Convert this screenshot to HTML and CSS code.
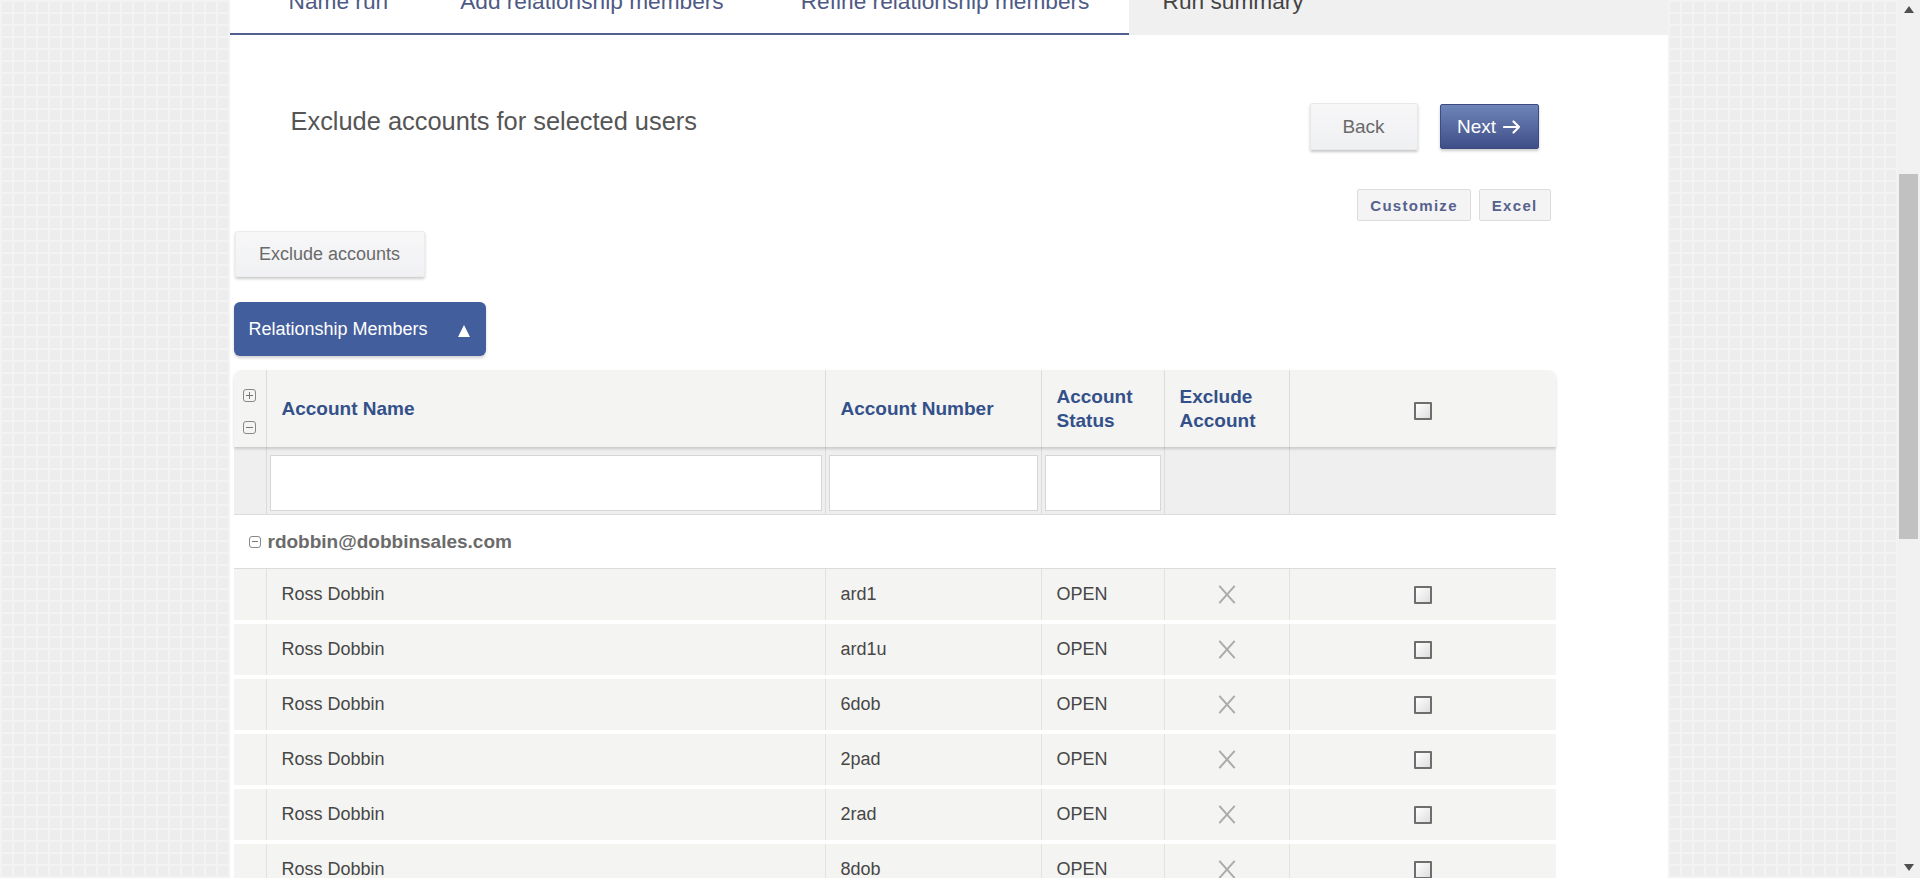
FILE: index.html
```html
<!DOCTYPE html>
<html>
<head>
<meta charset="utf-8">
<title>Run summary</title>
<link rel="stylesheet" href="styles.css">
</head>
<body>
<div class="viewport">
  <div class="stage">
    <main class="panel">
      <nav class="tabs">
        <div class="tab-track">
          <span class="tab-label t1">Name run</span>
          <span class="tab-label t2">Add relationship members</span>
          <span class="tab-label t3">Refine relationship members</span>
        </div>
        <div class="tab-active"><span class="tab-label dark">Run summary</span></div>
      </nav>

      <section class="head">
        <h1 class="title">Exclude accounts for selected users</h1>
        <div class="nav-buttons">
          <button class="btn-back">Back</button>
          <button class="btn-next">Next <svg class="arrow" width="18" height="14" viewBox="0 0 18 14"><path d="M1 7H16M10.5 1.5L16 7L10.5 12.5" fill="none" stroke="#fff" stroke-width="2.2" stroke-linecap="round" stroke-linejoin="round"/></svg></button>
        </div>
      </section>

      <div class="tools">
        <button class="tool-btn">Customize</button>
        <button class="tool-btn">Excel</button>
      </div>

      <div class="exclude-wrap">
        <button class="btn-exclude">Exclude accounts</button>
      </div>

      <div class="rm-bar">
        <span>Relationship Members</span>
        <span class="rm-caret"></span>
      </div>

      <div class="grid">
        <div class="row header">
          <div class="cell exp">
            <span class="box-icon plus"></span>
            <span class="box-icon minus"></span>
          </div>
          <div class="cell hcell">Account Name</div>
          <div class="cell hcell">Account Number</div>
          <div class="cell hcell">Account<br>Status</div>
          <div class="cell hcell">Exclude<br>Account</div>
          <div class="cell center hcheck"><span class="check"></span></div>
        </div>
        <div class="row filter">
          <div class="cell"></div>
          <div class="cell fcell"><input class="finput" type="text"></div>
          <div class="cell fcell"><input class="finput" type="text"></div>
          <div class="cell fcell"><input class="finput" type="text"></div>
          <div class="cell"></div>
          <div class="cell"></div>
        </div>
        <div class="group-row">
          <span class="box-icon minus small"></span>
          <span class="group-text">rdobbin@dobbinsales.com</span>
        </div>

        <div class="row data">
          <div class="cell"></div><div class="cell text">Ross Dobbin</div><div class="cell text">ard1</div><div class="cell text">OPEN</div>
          <div class="cell center"><span class="xmark"></span></div><div class="cell center"><span class="check"></span></div>
        </div>
        <div class="row data">
          <div class="cell"></div><div class="cell text">Ross Dobbin</div><div class="cell text">ard1u</div><div class="cell text">OPEN</div>
          <div class="cell center"><span class="xmark"></span></div><div class="cell center"><span class="check"></span></div>
        </div>
        <div class="row data">
          <div class="cell"></div><div class="cell text">Ross Dobbin</div><div class="cell text">6dob</div><div class="cell text">OPEN</div>
          <div class="cell center"><span class="xmark"></span></div><div class="cell center"><span class="check"></span></div>
        </div>
        <div class="row data">
          <div class="cell"></div><div class="cell text">Ross Dobbin</div><div class="cell text">2pad</div><div class="cell text">OPEN</div>
          <div class="cell center"><span class="xmark"></span></div><div class="cell center"><span class="check"></span></div>
        </div>
        <div class="row data">
          <div class="cell"></div><div class="cell text">Ross Dobbin</div><div class="cell text">2rad</div><div class="cell text">OPEN</div>
          <div class="cell center"><span class="xmark"></span></div><div class="cell center"><span class="check"></span></div>
        </div>
        <div class="row data">
          <div class="cell"></div><div class="cell text">Ross Dobbin</div><div class="cell text">8dob</div><div class="cell text">OPEN</div>
          <div class="cell center"><span class="xmark"></span></div><div class="cell center"><span class="check"></span></div>
        </div>
        <div class="row data">
          <div class="cell"></div><div class="cell text">Ross Dobbin</div><div class="cell text">9dob</div><div class="cell text">OPEN</div>
          <div class="cell center"><span class="xmark"></span></div><div class="cell center"><span class="check"></span></div>
        </div>
      </div>
    </main>
  </div>
  <aside class="scrollbar">
    <span class="sb-up"></span>
    <span class="sb-thumb"></span>
    <span class="sb-down"></span>
  </aside>
</div>
</body>
</html>
```

FILE: styles.css
```css
html, body {
  margin: 0;
  padding: 0;
  height: 878px;
  overflow: hidden;
}
body {
  font-family: "Liberation Sans", Arial, sans-serif;
  background-color: #ededed;
  background-image:
    linear-gradient(90deg, #f3f3f3 2px, transparent 2px),
    linear-gradient(#f3f3f3 2px, transparent 2px);
  background-size: 12px 12px;
}
.viewport {
  display: flex;
  height: 878px;
}
.stage {
  flex: 1;
  display: flex;
  justify-content: center;
  height: 878px;
  overflow: hidden;
}
.panel {
  width: 1438px;
  background: #fff;
  height: 878px;
  overflow: hidden;
}

/* tabs */
.tabs {
  display: flex;
  height: 35px;
}
.tab-track {
  width: 899px;
  box-sizing: border-box;
  border-bottom: 2px solid #50608f;
  display: flex;
  align-items: flex-start;
  padding-left: 59px;
  overflow: hidden;
}
.t2 { margin-left: 72px; }
.t3 { margin-left: 77px; }
.tab-active {
  flex: 1;
  background: #f0f0f0;
  padding-left: 34px;
  display: flex;
  align-items: flex-start;
  overflow: hidden;
}
.tab-label {
  font-size: 22.7px;
  line-height: 23px;
  margin-top: -10px;
  color: #4e5a85;
  white-space: nowrap;
}
.tab-label.dark { color: #444; }

/* heading */
.head {
  display: flex;
  align-items: flex-start;
  justify-content: space-between;
  margin-top: 68px;
  padding-left: 61px;
  padding-right: 129px;
}
.title {
  margin: 3px 0 0;
  font-size: 25.4px;
  line-height: 30px;
  font-weight: normal;
  color: #555;
}
.nav-buttons {
  display: flex;
  align-items: flex-start;
  gap: 22px;
}
.btn-back {
  width: 108px;
  height: 47px;
  border: 1px solid #e8e8e8;
  border-radius: 2px;
  background: linear-gradient(#f7f7f8, #eff0f2);
  box-shadow: 0 2px 3px rgba(0,0,0,0.22);
  font-family: "Liberation Sans", Arial, sans-serif;
  font-size: 19px;
  color: #6a6a6a;
}
.btn-next {
  margin-top: 1px;
  width: 99px;
  height: 45px;
  border: 1px solid #3d4b82;
  border-radius: 2px;
  background: linear-gradient(#6e85b8, #3f4e88);
  box-shadow: 0 2px 3px rgba(0,0,0,0.2);
  font-family: "Liberation Sans", Arial, sans-serif;
  font-size: 19px;
  color: #fff;
  display: flex;
  align-items: center;
  justify-content: center;
  gap: 7px;
  padding: 0;
}
.arrow { display: block; margin-top: 1px; }

/* tools */
.tools {
  display: flex;
  justify-content: flex-end;
  gap: 8px;
  margin-top: 39px;
  padding-right: 117px;
}
.tool-btn {
  height: 32px;
  padding: 0 12px;
  border: 1px solid #dcdcdc;
  border-radius: 2px;
  background: #f4f4f5;
  font-family: "Liberation Sans", Arial, sans-serif;
  font-size: 15px;
  font-weight: bold;
  letter-spacing: 1.3px;
  color: #56618d;
}

/* exclude */
.exclude-wrap {
  margin-top: 10px;
  padding-left: 5px;
}
.btn-exclude {
  width: 190px;
  height: 46px;
  border: 1px solid #ececec;
  border-radius: 2px;
  background: linear-gradient(#f7f7f8, #f0f1f3);
  box-shadow: 0 2px 3px rgba(0,0,0,0.2);
  font-family: "Liberation Sans", Arial, sans-serif;
  font-size: 18px;
  color: #6a6a6a;
}

/* relationship members bar */
.rm-bar {
  margin: 25px 0 0 4px;
  width: 252px;
  height: 54px;
  box-sizing: border-box;
  border-radius: 6px;
  background: #425e9d;
  box-shadow: 0 2px 3px rgba(0,0,0,0.18);
  display: flex;
  align-items: center;
  justify-content: space-between;
  padding: 0 16px 0 15px;
  color: #fff;
  font-size: 18px;
}
.rm-caret {
  width: 0;
  height: 0;
  border-left: 6px solid transparent;
  border-right: 6px solid transparent;
  border-bottom: 12px solid #fff;
  margin-top: 4px;
}

/* grid */
.grid {
  margin: 14px 0 0 4px;
  width: 1322px;
}
.row {
  display: grid;
  grid-template-columns: 32px 559px 216px 123px 125px 267px;
}
.cell {
  box-sizing: border-box;
  border-left: 1px solid #dcdcdc;
}
.cell:first-child { border-left: none; }
.header {
  height: 77px;
  background: #f4f4f2;
  border-radius: 8px 8px 0 0;
  box-shadow: 0 2px 3px rgba(0,0,0,0.16);
  position: relative;
  z-index: 1;
}
.hcell {
  display: flex;
  align-items: center;
  padding-left: 15px;
  font-size: 19px;
  line-height: 24px;
  font-weight: bold;
  color: #33508a;
}
.hcheck { padding-top: 4px; }
.exp {
  display: flex;
  flex-direction: column;
  align-items: center;
  padding-top: 19px;
  gap: 19px;
}
.box-icon {
  position: relative;
  display: block;
  width: 11px;
  height: 11px;
  border: 1px solid #888;
  border-radius: 3px;
  box-sizing: content-box;
}
.box-icon::before {
  content: "";
  position: absolute;
  left: 2px;
  top: 5px;
  width: 7px;
  height: 1px;
  background: #777;
}
.box-icon.plus::after {
  content: "";
  position: absolute;
  left: 5px;
  top: 2px;
  width: 1px;
  height: 7px;
  background: #777;
}
.center {
  display: flex;
  align-items: center;
  justify-content: center;
}
.check {
  display: block;
  width: 18px;
  height: 18px;
  box-sizing: border-box;
  border: 2px solid #6e6e6e;
  border-radius: 1px;
  background: linear-gradient(135deg, #ffffff, #dedede);
}
.filter {
  height: 68px;
  background: #efefef;
  border-bottom: 1px solid #dcdcdc;
  box-sizing: border-box;
}
.fcell {
  padding: 8px 3px 3px;
}
.finput {
  display: block;
  width: 100%;
  height: 56px;
  box-sizing: border-box;
  border: 1px solid #d6d6d6;
  background: #fff;
  margin: 0;
}
.group-row {
  height: 54px;
  box-sizing: border-box;
  border-bottom: 1px solid #dcdcdc;
  display: flex;
  align-items: center;
  gap: 7px;
  padding-left: 15px;
}
.box-icon.small {
  width: 10px;
  height: 10px;
}
.box-icon.small::before { left: 2px; top: 4px; width: 6px; }
.group-text {
  font-size: 19px;
  font-weight: bold;
  color: #6b6b6b;
}
.data {
  height: 55px;
  background: #f4f4f2;
  border-bottom: 4px solid #fff;
  box-sizing: border-box;
}
.data .cell { border-left-color: #e2e2e2; }
.text {
  display: flex;
  align-items: center;
  padding-left: 15px;
  font-size: 18px;
  color: #474747;
}
.xmark {
  position: relative;
  display: block;
  width: 20px;
  height: 20px;
}
.xmark::before, .xmark::after {
  content: "";
  position: absolute;
  left: 9px;
  top: 0;
  width: 2px;
  height: 23px;
  margin-top: -1.5px;
  background: #ababab;
  transform: rotate(42deg);
}
.xmark::after { transform: rotate(-42deg); }

/* scrollbar */
.scrollbar {
  width: 23px;
  height: 878px;
  background: #f1f1f1;
  display: flex;
  flex-direction: column;
  align-items: center;
}
.sb-up, .sb-down {
  width: 0;
  height: 0;
  border-left: 5px solid transparent;
  border-right: 5px solid transparent;
}
.sb-up {
  border-bottom: 7px solid #505050;
  margin-top: 6px;
}
.sb-thumb {
  width: 19px;
  height: 365px;
  background: #c1c1c1;
  margin-top: 161px;
}
.sb-down {
  border-top: 7px solid #505050;
  margin-top: auto;
  margin-bottom: 7px;
}
```
